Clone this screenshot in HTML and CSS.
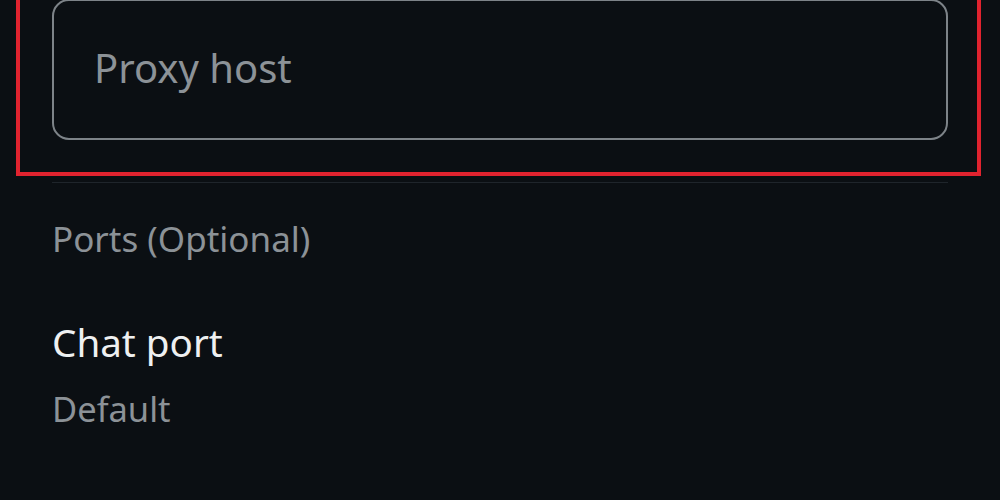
FILE: index.html
```html
<!DOCTYPE html>
<html lang="en">
<head>
<meta charset="utf-8">
<title>Proxy settings</title>
<link rel="stylesheet" href="styles.css">
</head>
<body>
<div class="page">
  <div class="highlight">
    <div class="field"><span class="placeholder">Proxy host</span></div>
  </div>
  <div class="content">
    <div class="divider"></div>
    <div class="section-title">Ports (Optional)</div>
    <div class="item">
      <div class="item-title">Chat port</div>
      <div class="item-value">Default</div>
    </div>
  </div>
</div>
</body>
</html>
```
FILE: styles.css
```css
html, body {
  margin: 0;
  padding: 0;
  background: #0b0f13;
  height: 100%;
  overflow: hidden;
}
body {
  font-family: "Noto Sans", "Open Sans", sans-serif;
}
.page {
  display: flex;
  flex-direction: column;
}
.highlight {
  margin: -35px 19px 0 16px;
  border: 4px solid #e1232f;
  padding: 30px 29px 32px 32px;
}
.field {
  box-sizing: border-box;
  height: 141px;
  border: 2px solid #7d8388;
  border-radius: 17px;
  display: flex;
  align-items: center;
  padding: 0 40px 4px;
}
.placeholder {
  font-size: 40px;
  color: #8c9297;
}
.content {
  padding: 0 52px 0 52px;
  display: flex;
  flex-direction: column;
}
.divider {
  margin-top: 6px;
  height: 1px;
  background: #1f252b;
}
.section-title {
  margin-top: 32px;
  font-size: 35px;
  line-height: 48px;
  color: #8c9297;
}
.item {
  margin-top: 53px;
  display: flex;
  flex-direction: column;
  gap: 17px;
}
.item-title {
  font-size: 38.6px;
  line-height: 52px;
  color: #eef0f1;
}
.item-value {
  font-size: 34.5px;
  line-height: 48px;
  color: #8c9297;
}
```
